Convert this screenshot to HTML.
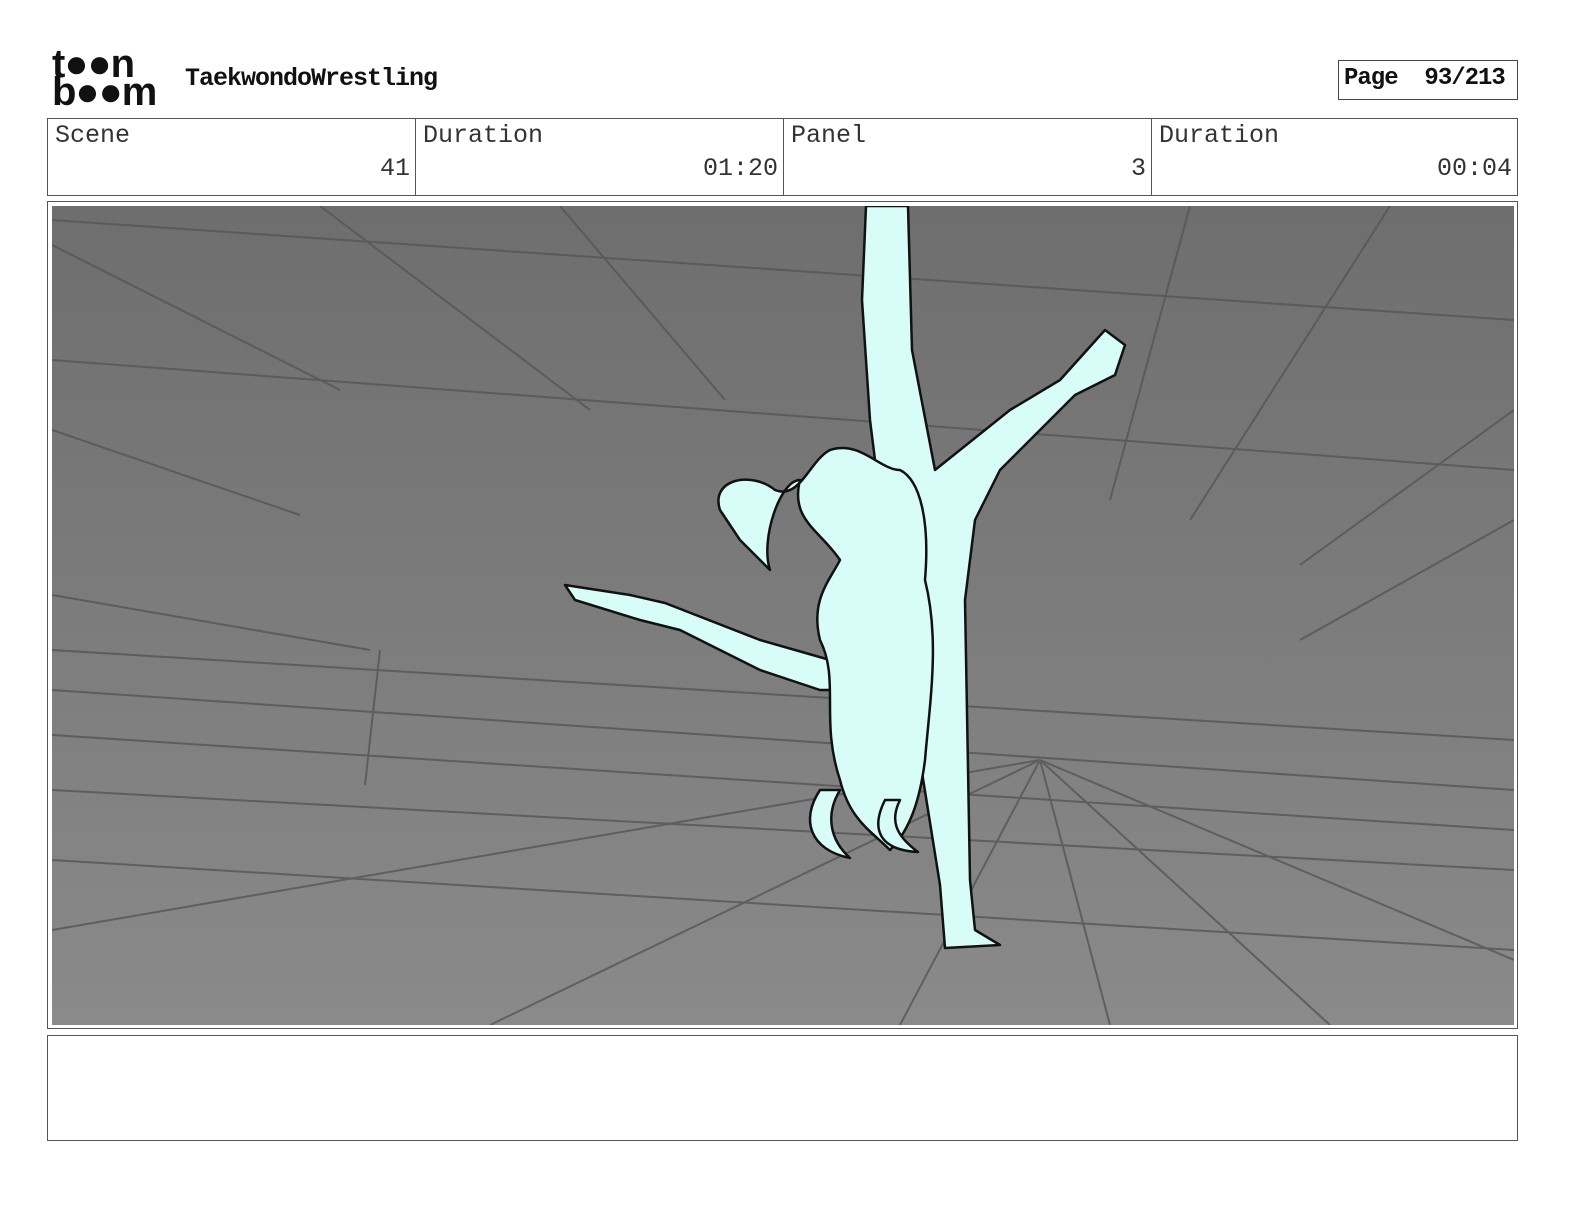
<!DOCTYPE html>
<html style="overflow:hidden"><head><style>
html,body{margin:0;padding:0}
body{width:1584px;height:1224px;background:#fff;position:relative;font-family:"Liberation Mono",monospace;overflow:hidden}
.abs{position:absolute}
.cell{position:absolute;top:118px;height:78px;border:1px solid #555;box-sizing:border-box;font-size:25px;color:#333}
.cell .l{position:absolute;left:7px;top:2px}
.cell .r{position:absolute;right:5px;top:35px}
</style></head><body>
<div class="abs" style="left:52px;top:50px;font-family:'Liberation Sans',sans-serif;font-weight:bold;font-size:40px;line-height:28px;letter-spacing:-1px;color:#111">t●●n<br>b●●m</div>
<div class="abs" style="left:185px;top:64px;font-weight:bold;font-size:25px;letter-spacing:-1px;color:#111">TaekwondoWrestling</div>
<div class="abs" style="left:1338px;top:60px;width:180px;height:40px;border:1px solid #444;box-sizing:border-box;font-weight:bold;font-size:24px;letter-spacing:-1px;padding:4px 0 0 5px;color:#111;white-space:pre">Page  93/213</div>
<div class="cell" style="left:47px;width:369px"><span class="l">Scene</span><span class="r">41</span></div>
<div class="cell" style="left:415px;width:369px"><span class="l">Duration</span><span class="r">01:20</span></div>
<div class="cell" style="left:783px;width:369px"><span class="l">Panel</span><span class="r">3</span></div>
<div class="cell" style="left:1151px;width:367px"><span class="l">Duration</span><span class="r">00:04</span></div>
<div class="abs" style="left:47px;top:201px;width:1471px;height:828px;border:1px solid #555;box-sizing:border-box"></div>
<svg class="abs" style="left:52px;top:206px" width="1462" height="819" viewBox="52 206 1462 819">
<defs><linearGradient id="g" x1="0" y1="0" x2="0" y2="1"><stop offset="0" stop-color="#6e6e6e"/><stop offset="1" stop-color="#8a8a8a"/></linearGradient></defs>
<rect x="52" y="206" width="1462" height="819" fill="url(#g)"/>
<g stroke="#555" stroke-width="2" fill="none" opacity="0.8">
<path d="M52 245 L340 390 M320 206 L590 410 M560 206 L725 400 M52 360 L1514 470 M52 430 L300 515 M1190 206 L1110 500 M1390 206 L1190 520 M1514 410 L1300 565 M1514 520 L1300 640 M52 220 L1514 320"/>
<path d="M52 595 L370 650 M52 650 L1514 740 M52 690 L1514 790 M52 735 L1514 830 M52 790 L1514 870 M380 650 L365 785 M52 930 L1040 760 M490 1025 L1040 760 M900 1025 L1040 760 M1110 1025 L1040 760 M1330 1025 L1040 760 M1514 960 L1040 760 M52 860 L1514 950"/>
</g>
<g fill="#d8fdf8" stroke="#111" stroke-width="2.5" stroke-linejoin="round">
<path d="M866 206 L908 206 L912 350 L935 470 L1010 410 L1060 380 L1105 330 L1125 345 L1115 375 L1075 395 L1000 470 L975 520 L965 600 L970 880 L975 930 L1000 945 L945 948 L940 885 L920 760 L925 600 L905 560 L880 500 L870 420 L862 300 Z"/>
<path d="M565 585 L630 595 L665 603 L760 640 L830 660 L850 690 L820 690 L760 670 L680 630 L640 620 L575 600 Z"/>
<path d="M830 450 C860 440 880 470 900 470 C920 480 930 520 925 580 C940 640 930 700 925 760 C920 800 910 830 890 850 C870 830 850 820 840 780 C820 720 840 680 820 640 C810 600 830 580 840 560 C820 530 790 520 800 480 C780 480 760 540 770 570 L740 540 L720 510 C710 480 750 470 775 490 C800 500 810 460 830 450 Z"/>
<path d="M820 790 C800 820 810 850 850 858 C830 840 825 815 840 790 Z"/>
<path d="M885 800 C870 830 880 850 918 852 C895 835 890 820 900 800 Z"/>
</g>
</svg>
<div class="abs" style="left:47px;top:1035px;width:1471px;height:106px;border:1px solid #555;box-sizing:border-box"></div>
</body></html>
